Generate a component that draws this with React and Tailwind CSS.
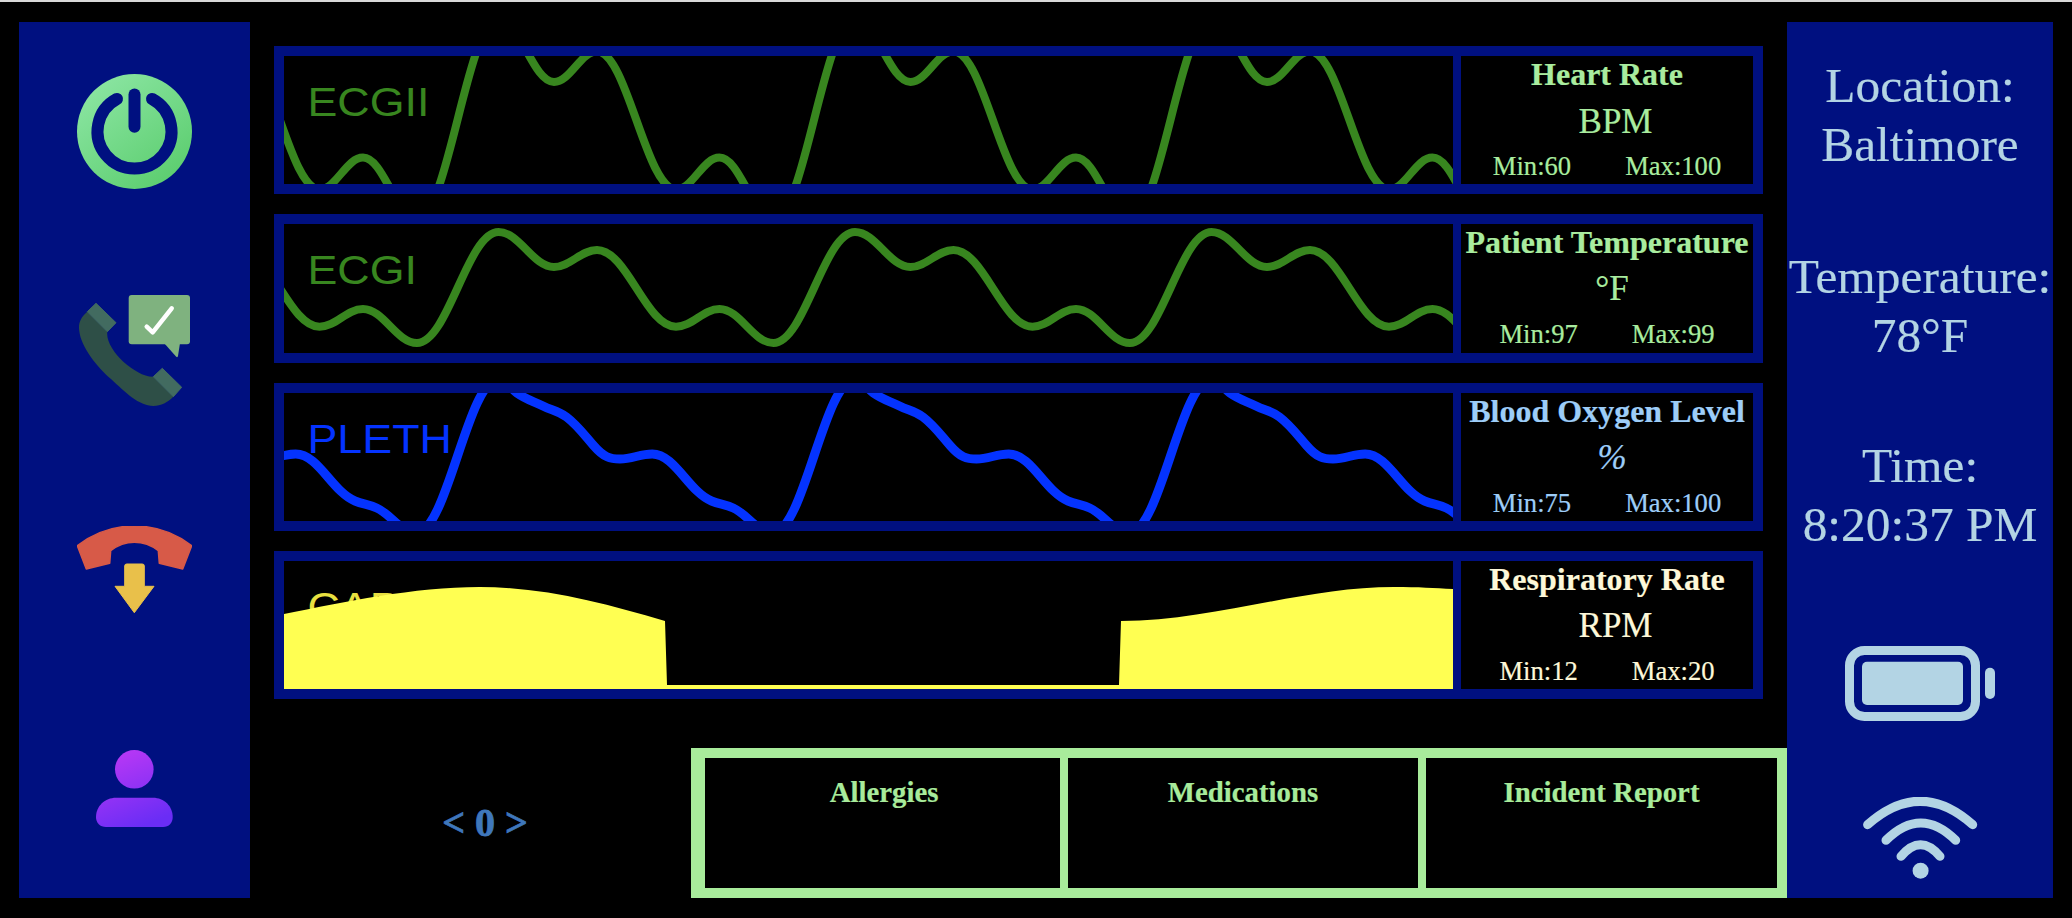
const PERIOD = 356.5;

// Hermite curve: each knot is [x, y, slope].
function hermitePath(k) {
  let d = `M${k[0][0]} ${k[0][1]}`;
  for (let i = 1; i < k.length; i++) {
    const [x0, y0, m0] = k[i - 1];
    const [x1, y1, m1] = k[i];
    const h = (x1 - x0) * 0.38;
    d += ` C${x0 + h} ${y0 + h * m0} ${x1 - h} ${y1 - h * m1} ${x1} ${y1}`;
  }
  return d;
}

function repeat(cycle, from, to) {
  const out = [];
  for (let n = from; n <= to; n++) {
    for (const [x, y, m] of cycle) out.push([x + n * PERIOD, y, m]);
  }
  return out;
}

const ecgOne = [
  [35.5, 102.7, 0], [79, 85, 0], [133, 119, 0], [214.5, 8, 0], [270, 43, 0], [313, 26, 0],
];
const ecgTwo = ecgOne.map(([x, y, m]) => [x, 1.8 * y - 51.4, m]);
const plethCycle = [
  [11.7, 61, 0], [71, 108, 0.4], [92.7, 115, 0.45], [132, 140, 0], [215, -14, 0],
  [233, 0, 0.7], [259, 13, 0.5], [282.5, 24, 0.75], [310, 53, 1.15], [336, 66, 0],
];

const ecgOnePath = hermitePath(repeat(ecgOne, -1, 3));
const ecgTwoPath = hermitePath(repeat(ecgTwo, -1, 3));
const plethPath = hermitePath(repeat(plethCycle, -1, 3));
const capnoPath =
  "M0 128 L0 53 C60 41 130 26 195.5 26 C260 26 320 42 381 60 L383 124 L835 124 L837 60 C928 60 1019 26 1110 26 C1135 26 1150 27 1169 28 L1169 128 Z";

function WaveLabel({ color, children }) {
  return (
    <text
      x="0"
      y="0"
      transform="translate(23.5 60) scale(1.12 1)"
      fill={color}
      fontFamily="'Liberation Sans', Arial, sans-serif"
      fontSize="40"
    >
      {children}
    </text>
  );
}

function Chart({ label, color, children }) {
  return (
    <svg width="1169" height="128" viewBox="0 0 1169 128" className="block shrink-0 bg-black">
      <WaveLabel color={color}>{label}</WaveLabel>
      {children}
    </svg>
  );
}

function Wave({ d, color, width }) {
  return <path d={d} fill="none" stroke={color} strokeWidth={width} />;
}

function VitalRow({ chart, title, unit, unitClass, min, max, color }) {
  return (
    <div className="flex h-[148.33px] w-[1489px] border-[10px] border-[#001080] bg-black">
      {chart}
      <div
        className="flex flex-1 flex-col items-center gap-[10px] border-l-[8px] border-[#001080] pt-px whitespace-nowrap"
        style={{ color }}
      >
        <div className="text-[32px] leading-[34px] font-bold">{title}</div>
        <div className={`text-[35px] leading-[40px] ${unitClass}`}>{unit}</div>
        <div className="flex gap-[54px] text-[26.6px] leading-[30px]">
          <span>Min:{min}</span>
          <span>Max:{max}</span>
        </div>
      </div>
    </div>
  );
}

function PowerIcon() {
  return (
    <svg width="115" height="115" viewBox="-57.5 -57.5 115 115">
      <defs>
        <linearGradient id="powerFill" x1="0.15" y1="0.05" x2="0.85" y2="0.95">
          <stop offset="0" stopColor="#8be5a2" />
          <stop offset="1" stopColor="#5bcd6e" />
        </linearGradient>
      </defs>
      <circle cx="0" cy="0" r="57.5" fill="url(#powerFill)" />
      <path d="M-17.5 -32.6 A37 37 0 1 0 17.5 -32.6" fill="none" stroke="#001080" strokeWidth="12" strokeLinecap="round" />
      <path d="M0 -37 V-4.7" fill="none" stroke="#001080" strokeWidth="12" strokeLinecap="round" />
    </svg>
  );
}

function PhoneCheckIcon() {
  return (
    <svg width="112" height="112" viewBox="0 0 112 112">
      <rect x="49.7" y="0" width="61.3" height="49.3" rx="3" fill="#7fb27f" />
      <path d="M85 48 L97 61.5 Q98.5 63 99 61 L101 48 Z" fill="#7fb27f" />
      <path d="M67.7 31.7 L73.7 37.3 L92.7 13.3" fill="none" stroke="#ffffff" strokeWidth="4.5" strokeLinecap="round" strokeLinejoin="round" />
      <path
        d="M8.3 16.7 C2 22 -1 28 0.3 36 C2 52 18 72 32 84 C46 97 60 111 74.3 111 C82 111 89 107 94.3 101.7 L74.3 81.7 C65 82 54 75 44.3 66.7 C35 58 27 46 28.3 36.7 Z"
        fill="#2e4f47"
      />
      <path d="M8.3 16.7 L17 8.3 L37 27.7 L28.3 36.7 Z" fill="#426b60" stroke="#426b60" strokeWidth="1" strokeLinejoin="round" />
      <path d="M74.3 81.7 L83.3 73.3 L102.7 92.3 L94.3 101.7 Z" fill="#426b60" stroke="#426b60" strokeWidth="1" strokeLinejoin="round" />
    </svg>
  );
}

function HangupIcon() {
  return (
    <svg width="115" height="87" viewBox="0 0 115 87">
      <path
        d="M0.3 19.7 C18 6 38 0 57.3 0 C77 0 97 6 114.7 19.7 L105.7 43 L82.3 37.3 L81.3 24.7 C74 19 66 16.3 57.3 16.3 C49 16.3 41 19 33.7 24.7 L32.7 37.3 L9.3 43 Z"
        fill="#d75a48"
        stroke="#d75a48"
        strokeWidth="1.5"
        strokeLinejoin="round"
      />
      <path
        d="M47.7 40 Q47.7 38 49.7 38 H65.3 Q67.3 38 67.3 40 V60.3 H77 L57.3 86.7 L38 60.3 H47.7 Z"
        fill="#e9c04a"
        stroke="#e9c04a"
        strokeWidth="1"
        strokeLinejoin="round"
      />
    </svg>
  );
}

function PersonIcon() {
  return (
    <svg width="77" height="77" viewBox="0 0 77 77">
      <defs>
        <linearGradient id="personFill" gradientUnits="userSpaceOnUse" x1="20" y1="0" x2="50" y2="75">
          <stop offset="0" stopColor="#bb38f5" />
          <stop offset="1" stopColor="#6a2df5" />
        </linearGradient>
      </defs>
      <circle cx="38.3" cy="19.3" r="19.3" fill="url(#personFill)" />
      <path
        d="M20 47.7 H57 C68 47.7 76.7 56 76.7 67 C76.7 73 73 77 67 77 H10 C4 77 0 73 0 67 C0 56 9 47.7 20 47.7 Z"
        fill="url(#personFill)"
      />
    </svg>
  );
}

function BatteryIcon() {
  return (
    <svg width="150" height="75" viewBox="0 0 150 75">
      <rect x="4.5" y="4.5" width="126" height="66" rx="15" fill="none" stroke="#b3d4e4" strokeWidth="9" />
      <rect x="17" y="15.7" width="101" height="43.3" rx="5" fill="#b3d4e4" />
      <rect x="140" y="21.7" width="10" height="31.3" rx="5" fill="#b3d4e4" />
    </svg>
  );
}

function WifiIcon() {
  return (
    <svg width="115" height="82" viewBox="0 0 115 82">
      <g fill="none" stroke="#b3d4e4" strokeWidth="9" strokeLinecap="round">
        <path d="M4.6 27.7 Q57.2 -19 109.7 27.7" />
        <path d="M23 43.3 Q57.8 8.7 92.7 43.3" />
        <path d="M38 59.3 Q57.5 36.1 77 59.3" />
      </g>
      <circle cx="57.6" cy="73.7" r="8" fill="#b3d4e4" />
    </svg>
  );
}

function InfoBlock({ top, bottom, className = "" }) {
  return (
    <div className={`text-center text-[49.4px] leading-[59px] whitespace-nowrap ${className}`}>
      <div>{top}</div>
      <div>{bottom}</div>
    </div>
  );
}

function Tab({ label, className }) {
  return (
    <div className={`pt-[18px] text-center text-[28.8px] leading-[33px] font-bold ${className}`}>{label}</div>
  );
}

export default function App() {
  return (
    <div className="h-[918px] w-full overflow-hidden bg-black font-['Liberation_Serif','Times_New_Roman',serif] [-webkit-text-stroke:0.2px]">
      <div className="h-[2px] bg-[#d9d9d9]" />
      <div className="mt-[20px] flex h-[876px] pl-[19px]">
        <aside className="grid w-[231px] shrink-0 grid-rows-4 place-items-center bg-[#001080]">
          <PowerIcon />
          <PhoneCheckIcon />
          <HangupIcon />
          <PersonIcon />
        </aside>

        <main className="ml-[24px] flex w-[1513px] shrink-0 flex-col pt-[24px]">
          <div className="flex flex-col gap-[20px]">
            <VitalRow
              color="#a9ec9f"
              title="Heart Rate"
              unit="BPM"
              unitClass="mt-px -mb-px pl-[17px]"
              min="60"
              max="100"
              chart={
                <Chart label="ECGII" color="#38861f">
                  <Wave d={ecgTwoPath} color="#38861f" width="8" />
                </Chart>
              }
            />
            <VitalRow
              color="#a9ec9f"
              title="Patient Temperature"
              unit="°F"
              unitClass="pl-[10px]"
              min="97"
              max="99"
              chart={
                <Chart label="ECGI" color="#38861f">
                  <Wave d={ecgOnePath} color="#38861f" width="8" />
                </Chart>
              }
            />
            <VitalRow
              color="#9dcdf8"
              title="Blood Oxygen Level"
              unit="%"
              unitClass="pl-[10px] italic"
              min="75"
              max="100"
              chart={
                <Chart label="PLETH" color="#0433ff">
                  <Wave d={plethPath} color="#0433ff" width="9" />
                </Chart>
              }
            />
            <VitalRow
              color="#fdf8d9"
              title="Respiratory Rate"
              unit="RPM"
              unitClass="pl-[17px]"
              min="12"
              max="20"
              chart={
                <Chart label="CAPNO" color="#e8e040">
                  <path d={capnoPath} fill="#ffff52" />
                </Chart>
              }
            />
          </div>

          <div className="mt-auto flex h-[150px]">
            <div className="flex w-[417px] items-center justify-center pl-[5px] text-[40px] leading-[46px] font-bold text-[#3f77bb] [-webkit-text-stroke:0.8px]">
              &lt; 0 &gt;
            </div>
            <div className="flex w-[1096px] border-[10px] border-l-[14px] border-[#a8eb9b] bg-black text-[#a8eb9b]">
              <Tab label="Allergies" className="w-[355px] pl-[3px]" />
              <Tab label="Medications" className="w-[358px] border-l-[8px] border-[#a8eb9b]" />
              <Tab label="Incident Report" className="w-[359px] border-l-[8px] border-[#a8eb9b]" />
            </div>
          </div>
        </main>

        <aside className="flex w-[266px] shrink-0 flex-col items-center bg-[#001080] pt-[34px] text-[#b3d4e4]">
          <div className="flex flex-col gap-[73px]">
            <InfoBlock top="Location:" bottom="Baltimore" />
            <InfoBlock top="Temperature:" bottom="78°F" />
            <InfoBlock top="Time:" bottom="8:20:37 PM" className="-mt-[2px]" />
          </div>
          <div className="mt-[92px] flex flex-col items-center gap-[76px]">
            <BatteryIcon />
            <WifiIcon />
          </div>
        </aside>
      </div>
    </div>
  );
}
